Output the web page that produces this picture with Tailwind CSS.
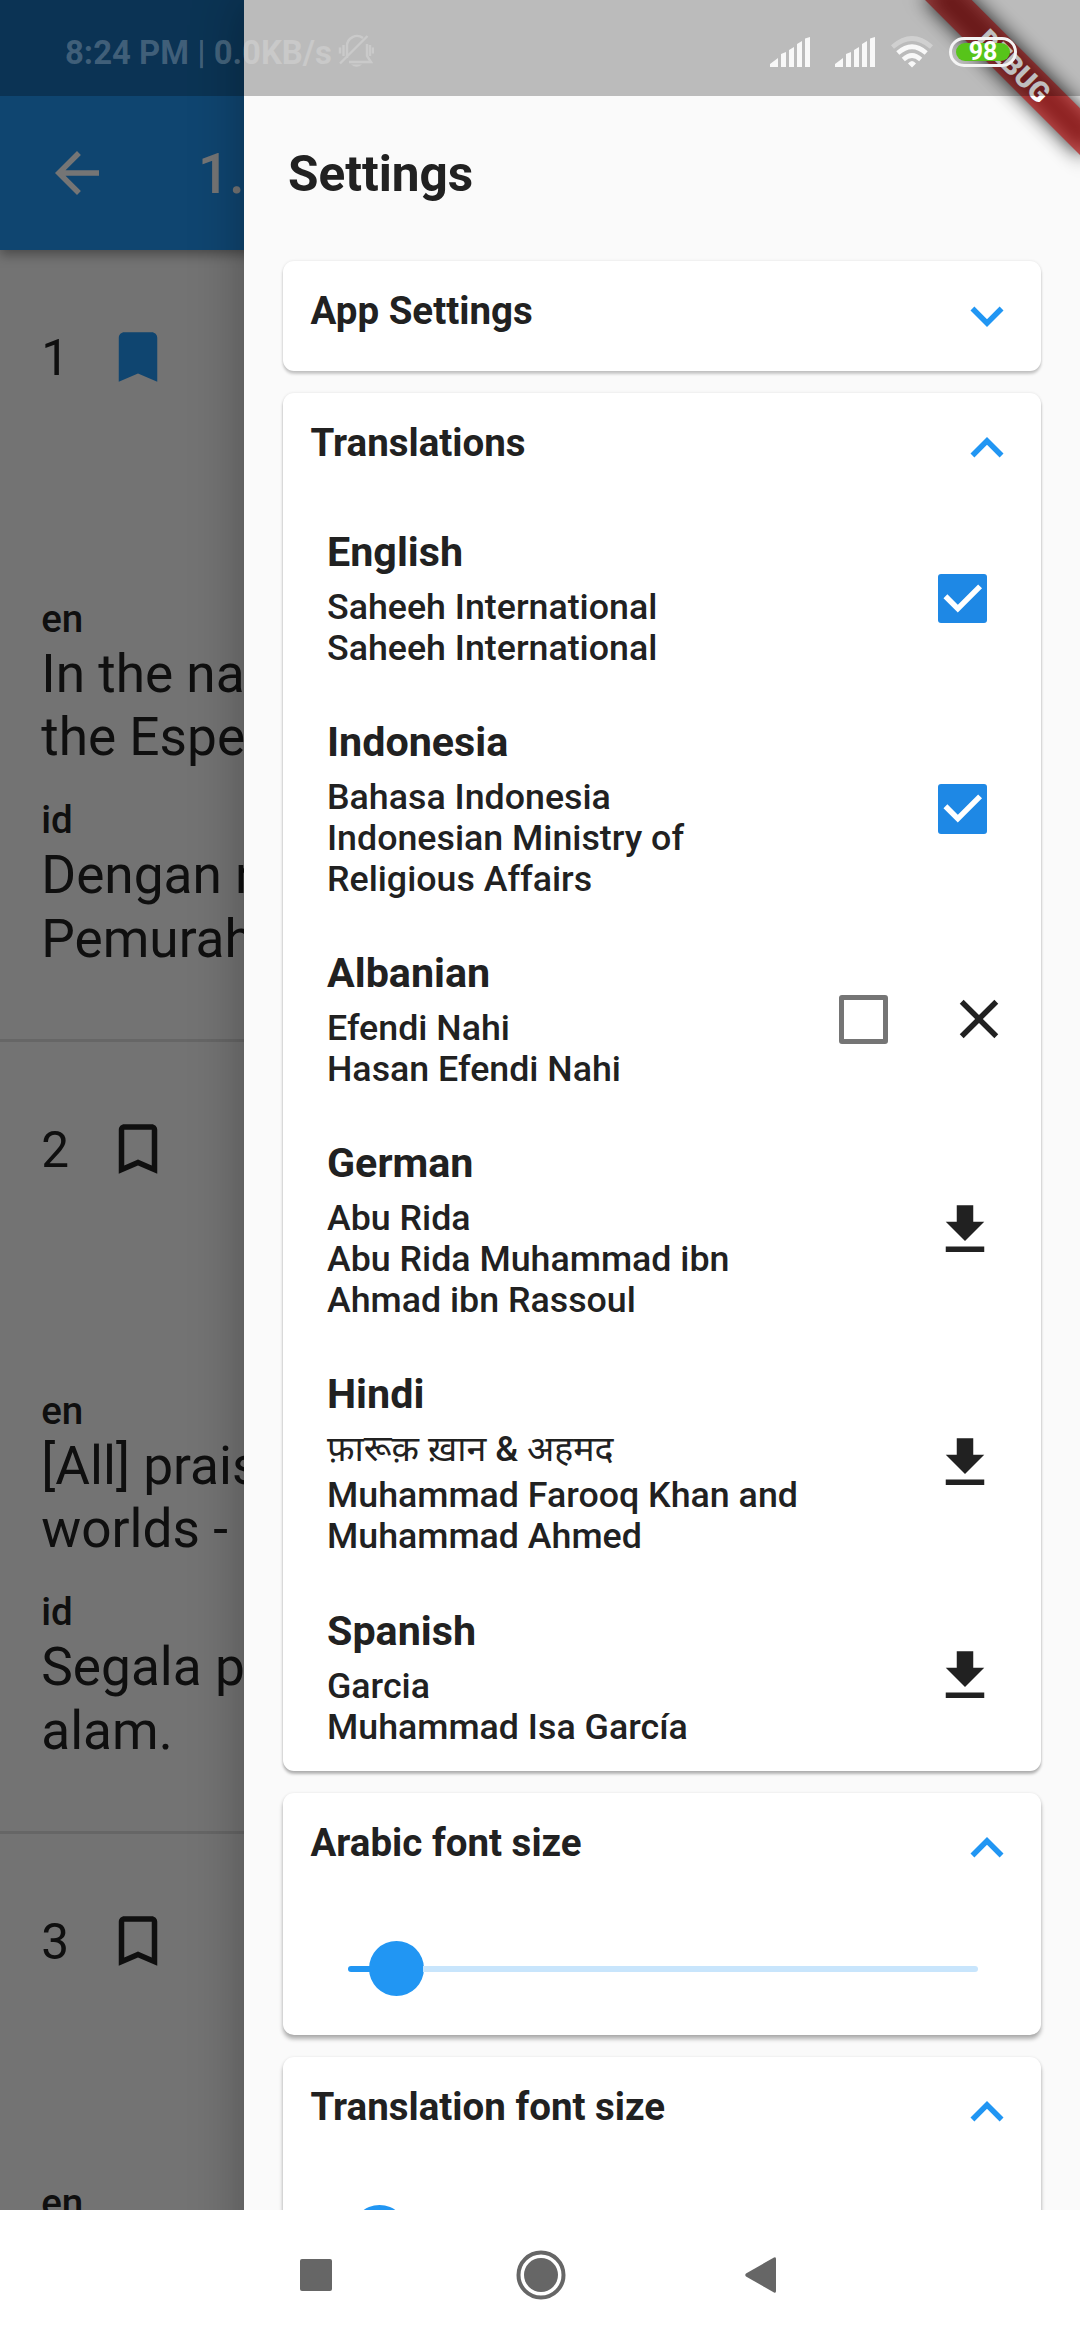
<!DOCTYPE html>
<html lang="en">
<head>
<meta charset="utf-8">
<title>Settings</title>
<script src="https://cdn.jsdelivr.net/npm/@tailwindcss/browser@4"></script>
</head>
<body class="bg-white">
<div class="relative flex h-[2340px] w-[1080px] flex-col overflow-hidden font-[Roboto,'Noto_Sans',sans-serif] text-[#212121]">

  <!-- Reader page behind the drawer -->
  <main class="flex h-[2210px] flex-col overflow-hidden bg-[#fafafa]">
    <header class="relative flex h-[250px] shrink-0 items-center bg-[#2196f3] pt-24 pl-11 text-white shadow-[0_5px_11px_rgba(0,0,0,0.35)]">
      <svg class="size-[66px]" viewBox="0 0 24 24" fill="currentColor"><path d="M20 11H7.83l5.59-5.59L12 4l-8 8 8 8 1.41-1.41L7.83 13H20v-2z"/></svg>
      <h1 class="pt-0.5 pl-[88px] text-[55px] leading-[66px] font-medium whitespace-nowrap">1.</h1>
    </header>

    <article class="h-[792px] shrink-0 border-b-3 border-[#dedede] pt-[73.5px] pl-[41.25px]">
      <div class="flex h-[66px] items-center">
        <span class="w-[63.25px] pt-[3px] text-[49.5px] leading-[66px]">1</span>
        <svg class="size-[66px] text-[#2196f3]" viewBox="0 0 24 24" fill="currentColor"><path d="M17 3H7c-1.1 0-1.99.9-1.99 2L5 21l7-3 7 3V5c0-1.1-.9-2-2-2z"/></svg>
      </div>
      <div class="pt-[206px] text-[53.2px] leading-[63.3px] whitespace-nowrap">
        <p class="mb-[2.7px] text-[38.5px] leading-[45px] font-medium">en</p>
        <p>In the na<br>the Espe</p>
        <p class="mt-[27px] mb-[2.7px] text-[38.5px] leading-[45px] font-medium">id</p>
        <p class="w-[203px] overflow-hidden">Dengan n<br>Pemurah</p>
      </div>
    </article>

    <article class="h-[792px] shrink-0 border-b-3 border-[#dedede] pt-[73.5px] pl-[41.25px]">
      <div class="flex h-[66px] items-center">
        <span class="w-[63.25px] pt-[3px] text-[49.5px] leading-[66px]">2</span>
        <svg class="size-[66px]" viewBox="0 0 24 24" fill="currentColor"><path d="M17 3H7c-1.1 0-1.99.9-1.99 2L5 21l7-3 7 3V5c0-1.1-.9-2-2-2zm0 15l-5-2.18L7 18V5h10v13z"/></svg>
      </div>
      <div class="pt-[206px] text-[53.2px] leading-[63.3px] whitespace-nowrap">
        <p class="mb-[2.7px] text-[38.5px] leading-[45px] font-medium">en</p>
        <p class="w-[203px] overflow-hidden">[All] prais<br>worlds -</p>
        <p class="mt-[27px] mb-[2.7px] text-[38.5px] leading-[45px] font-medium">id</p>
        <p>Segala p<br>alam.</p>
      </div>
    </article>

    <article class="h-[792px] shrink-0 pt-[73.5px] pl-[41.25px]">
      <div class="flex h-[66px] items-center">
        <span class="w-[63.25px] pt-[3px] text-[49.5px] leading-[66px]">3</span>
        <svg class="size-[66px]" viewBox="0 0 24 24" fill="currentColor"><path d="M17 3H7c-1.1 0-1.99.9-1.99 2L5 21l7-3 7 3V5c0-1.1-.9-2-2-2zm0 15l-5-2.18L7 18V5h10v13z"/></svg>
      </div>
      <p class="mt-[206px] text-[38.5px] leading-[45px] font-medium">en</p>
    </article>
  </main>

  <!-- Scrim and drawer -->
  <div class="absolute inset-x-0 top-0 flex h-[2210px] justify-end overflow-hidden bg-black/54">
    <aside class="h-[2400px] w-[836px] shrink-0 bg-[#fafafa] pt-24 pr-[39px] pl-[39px] shadow-[0_0_50px_rgba(0,0,0,0.3)]">
      <h2 class="h-[165px] pt-[47.5px] pl-[5px] text-[49.5px] leading-[60px] font-bold">Settings</h2>

      <div class="flex flex-col gap-[22px]">
        <section class="h-[110px] rounded-[11px] bg-white shadow-[0_3px_3px_rgba(0,0,0,0.2),0_0_3px_rgba(0,0,0,0.1)]">
          <div class="flex items-start justify-between pt-[22px] pr-[21.5px] pl-[27.5px]">
            <h3 class="pt-[5px] text-[38.5px] leading-[45px] font-bold">App Settings</h3>
            <svg class="size-[66px] text-[#2196f3]" viewBox="0 0 24 24" fill="currentColor"><path d="M7.41 8.59L12 13.17l4.59-4.58L18 10l-6 6-6-6 1.41-1.41z"/></svg>
          </div>
        </section>

        <section class="h-[1377.5px] rounded-[11px] bg-white shadow-[0_3px_3px_rgba(0,0,0,0.28),0_0_3px_rgba(0,0,0,0.1)]">
          <div class="flex h-[110px] items-start justify-between pt-[22px] pr-[21.5px] pl-[27.5px]">
            <h3 class="pt-[5px] text-[38.5px] leading-[45px] font-bold">Translations</h3>
            <svg class="size-[66px] text-[#2196f3]" viewBox="0 0 24 24" fill="currentColor"><path d="M7.41 15.41L12 10.83l4.59 4.58L18 14l-6-6-6 6z"/></svg>
          </div>
          <ul class="flex flex-col gap-[49.1px] pt-[24.8px] pl-11 text-[35.75px] leading-[41px] font-medium">
            <li class="flex items-center justify-between pr-[54px]">
              <div>
                <h4 class="mb-[11px] text-[41.25px] leading-[48px] font-bold">English</h4>
                <p>Saheeh International<br>Saheeh International</p>
              </div>
              <span class="flex size-[49.5px] rounded-[3px] bg-[#1e88e5]"><svg class="size-full" viewBox="0 0 18 18" fill="none" stroke="#fff" stroke-width="2"><path d="M2.7 8.1L7.2 12.6L15.3 4.5"/></svg></span>
            </li>
            <li class="flex items-center justify-between pr-[54px]">
              <div>
                <h4 class="mb-[11px] text-[41.25px] leading-[48px] font-bold">Indonesia</h4>
                <p>Bahasa Indonesia<br>Indonesian Ministry of<br>Religious Affairs</p>
              </div>
              <span class="flex size-[49.5px] rounded-[3px] bg-[#1e88e5]"><svg class="size-full" viewBox="0 0 18 18" fill="none" stroke="#fff" stroke-width="2"><path d="M2.7 8.1L7.2 12.6L15.3 4.5"/></svg></span>
            </li>
            <li class="flex items-center pr-[29px]">
              <div class="grow">
                <h4 class="mb-[11px] text-[41.25px] leading-[48px] font-bold">Albanian</h4>
                <p>Efendi Nahi<br>Hasan Efendi Nahi</p>
              </div>
              <span class="size-[49.5px] rounded-[3px] border-[5.5px] border-[#757575]"></span>
              <svg class="ml-[58px] size-[66px]" viewBox="0 0 24 24" fill="currentColor"><path d="M19 6.41L17.59 5 12 10.59 6.41 5 5 6.41 10.59 12 5 17.59 6.41 19 12 13.41 17.59 19 19 17.59 13.41 12z"/></svg>
            </li>
            <li class="flex items-center justify-between pr-[43px]">
              <div>
                <h4 class="mb-[11px] text-[41.25px] leading-[48px] font-bold">German</h4>
                <p>Abu Rida<br>Abu Rida Muhammad ibn<br>Ahmad ibn Rassoul</p>
              </div>
              <svg class="size-[66px]" viewBox="0 0 24 24" fill="currentColor"><path d="M19 9h-4V3H9v6H5l7 7 7-7zM5 18v2h14v-2H5z"/></svg>
            </li>
            <li class="flex items-center justify-between pr-[43px]">
              <div>
                <h4 class="mb-[11px] text-[41.25px] leading-[48px] font-bold">Hindi</h4>
                <p class="h-[45.5px] font-normal">फ़ारूक़ ख़ान <span class="font-medium">&amp;</span> अहमद</p>
                <p class="leading-[41.5px]">Muhammad Farooq Khan and<br>Muhammad Ahmed</p>
              </div>
              <svg class="mb-0.5 size-[66px]" viewBox="0 0 24 24" fill="currentColor"><path d="M19 9h-4V3H9v6H5l7 7 7-7zM5 18v2h14v-2H5z"/></svg>
            </li>
            <li class="flex items-center justify-between pr-[43px]">
              <div>
                <h4 class="mb-[11px] text-[41.25px] leading-[48px] font-bold">Spanish</h4>
                <p>Garcia<br>Muhammad Isa García</p>
              </div>
              <svg class="mb-0.5 size-[66px]" viewBox="0 0 24 24" fill="currentColor"><path d="M19 9h-4V3H9v6H5l7 7 7-7zM5 18v2h14v-2H5z"/></svg>
            </li>
          </ul>
        </section>

        <section class="h-[242px] rounded-[11px] bg-white shadow-[0_4px_4px_rgba(0,0,0,0.3),0_0_3px_rgba(0,0,0,0.08)]">
          <div class="flex h-[110px] items-start justify-between pt-[22px] pr-[21.5px] pl-[27.5px]">
            <h3 class="pt-[5px] text-[38.5px] leading-[45px] font-bold">Arabic font size</h3>
            <svg class="size-[66px] text-[#2196f3]" viewBox="0 0 24 24" fill="currentColor"><path d="M7.41 15.41L12 10.83l4.59 4.58L18 14l-6-6-6 6z"/></svg>
          </div>
          <div class="flex h-[132px] items-center pr-[63px] pl-[65px]">
            <span class="h-[6px] w-[22px] rounded-l-full bg-[#2196f3]"></span>
            <span class="-ml-px size-[55px] rounded-full bg-[#2196f3]"></span>
            <span class="-ml-px h-[6px] grow rounded-r-full bg-[#c8e5fc]"></span>
          </div>
        </section>

        <section class="h-[242px] rounded-[11px] bg-white shadow-[0_4px_4px_rgba(0,0,0,0.3),0_0_3px_rgba(0,0,0,0.08)]">
          <div class="flex h-[110px] items-start justify-between pt-[22px] pr-[21.5px] pl-[27.5px]">
            <h3 class="pt-[5.500px] text-[38.5px] leading-[45px] font-bold">Translation font size</h3>
            <svg class="size-[66px] text-[#2196f3]" viewBox="0 0 24 24" fill="currentColor"><path d="M7.41 15.41L12 10.83l4.59 4.58L18 14l-6-6-6 6z"/></svg>
          </div>
          <div class="flex h-[132px] items-center pr-[63px] pl-[65px]">
            <span class="h-[6px] w-[5px] rounded-l-full bg-[#2196f3]"></span>
            <span class="-ml-px size-[55px] rounded-full bg-[#2196f3]"></span>
            <span class="-ml-px h-[6px] grow rounded-r-full bg-[#c8e5fc]"></span>
          </div>
        </section>
      </div>
    </aside>
  </div>

  <!-- Corner ribbon -->
  <svg class="absolute top-0 right-0 size-[220px]" viewBox="860 0 220 220">
    <defs><filter id="soft" filterUnits="userSpaceOnUse" x="-200" y="-80" width="400" height="160" color-interpolation-filters="sRGB"><feGaussianBlur stdDeviation="10"/></filter></defs>
    <g transform="translate(1014.2 65.8) rotate(45)">
      <rect x="-110" y="-16.5" width="220" height="33" fill="#000" fill-opacity=".85" filter="url(#soft)"/>
      <rect x="-110" y="-16.5" width="220" height="33" fill="#b71c1c" fill-opacity=".7"/>
      <text x="0" y="10.2" text-anchor="middle" font-family="Roboto" font-weight="900" font-size="28" fill="#fff">DEBUG</text>
    </g>
  </svg>

  <!-- Status bar -->
  <div class="absolute inset-x-0 top-0 flex h-24 items-center bg-black/25 pl-[65px]">
    <span class="pt-2.5 text-[32.9px] leading-[38px] font-bold whitespace-nowrap text-white/22">8:24 PM | 0.0KB/s</span>
    <svg class="mt-1.5 ml-[6px] h-[34px] w-[36px] opacity-22" viewBox="338 34 36 34" fill="none" stroke="#fff" stroke-width="2.4">
      <path d="M347 58V46a10 10 0 0 1 16-8M367 44v12l4 6h-22M340 63.500L367.500 36M343.500 45v11M340 47.500v6M370 45v11M373 47.500v6"/>
      <path d="M351 64.500h11q-5.500 4.500-11 0z" fill="#fff" stroke="none"/>
    </svg>
    <div class="ml-auto flex h-8 items-center pt-[7px] pr-[63px]">
      <svg class="h-[30px] w-[41px]" viewBox="0 0 41 30" fill="#f8f8f8"><path d="M0 27l8-6v9H0zM11 17l5-2v15h-5zM19 13l5-3v20h-5zM27 7l5-3v26h-5zM35 1.500l5-1.500v30h-5z"/></svg>
      <svg class="ml-6 h-[30px] w-[41px]" viewBox="0 0 41 30" fill="#f8f8f8"><path d="M0 27l8-6v9H0zM11 17l5-2v15h-5zM19 13l5-3v20h-5zM27 7l5-3v26h-5zM35 1.500l5-1.500v30h-5z"/></svg>
      <svg class="ml-[15px] h-8 w-[42px]" viewBox="890 35.500 42 32" fill="none" stroke="#f8f8f8" stroke-width="4.600">
        <path stroke-opacity=".35" d="M891.500 46.500Q911 29.500 930.500 46.500"/>
        <path d="M896.800 52.500Q911 40 925.200 52.500M902.300 59Q911 51 919.700 59"/>
        <path d="M907 63q4-5 8 0l-4 4z" fill="#f8f8f8" stroke="none"/>
      </svg>
      <div class="ml-4 flex h-[30px] w-[68px] rounded-full border-3 border-[#f4f4f4] p-[3px] px-1">
        <span class="flex h-[18px] w-[55px] items-center justify-center rounded-full bg-[#57c41a] pt-px text-[25px] leading-[18px] font-bold text-white">98</span>
      </div>
    </div>
  </div>

  <!-- Navigation bar -->
  <nav class="flex h-[130px] items-center bg-white pl-[300px] text-[#666]">
    <span class="size-8 rounded-[2px] bg-[#666]"></span>
    <svg class="ml-[183.5px] size-[50px]" viewBox="0 0 50 50" fill="currentColor"><circle cx="25" cy="25" r="22.500" fill="none" stroke="currentColor" stroke-width="4"/><circle cx="25" cy="25" r="17"/></svg>
    <svg class="ml-[179.5px] h-9 w-[31px]" viewBox="0 0 31 36" fill="currentColor"><path d="M29 .5Q31-.5 31 2v32q0 2.500-2 1.500L1 19.500Q-.5 18 1 16.500z"/></svg>
  </nav>
</div>
</body>
</html>
